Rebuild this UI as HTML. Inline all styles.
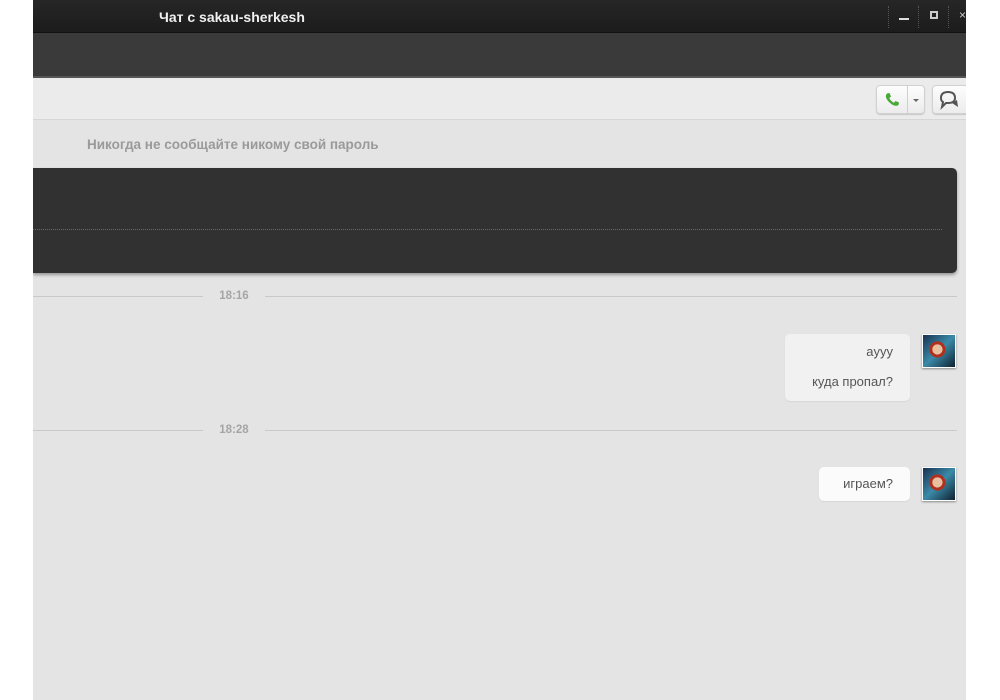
<!DOCTYPE html>
<html><head><meta charset="utf-8"><style>
*{margin:0;padding:0;box-sizing:border-box}
body{width:1000px;height:700px;background:#fff;position:relative;overflow:hidden;font-family:"Liberation Sans","DejaVu Sans",sans-serif}
.win{position:absolute;left:33px;top:0;width:933px;height:700px;background:#e4e4e4;overflow:hidden}
.title{position:absolute;left:0;top:0;width:933px;height:33px;background:linear-gradient(#262626,#1c1c1c);border-bottom:1px solid #111}
.title span{position:absolute;left:126px;top:9px;color:#f0f0f0;font-size:14px;font-weight:bold}
.bar2{position:absolute;left:0;top:33px;width:933px;height:45px;background:#3a3a3a;border-bottom:2px solid #555}
.tool{position:absolute;left:0;top:78px;width:933px;height:42px;background:#ebebeb;border-bottom:1px solid #d6d6d6}
.btn{position:absolute;top:85px;height:29px;background:linear-gradient(#fdfdfd,#ececec);border:1px solid #d0d0d0;border-radius:4px;box-shadow:0 1px 1px rgba(0,0,0,.15)}
.warn{position:absolute;left:54px;top:137px;color:#9a9a9a;font-size:13.5px;font-weight:bold}
.dark{position:absolute;left:0;top:168px;width:924px;height:105px;background:#313131;border-radius:0 5px 5px 0;box-shadow:0 2px 3px rgba(0,0,0,.35)}
.dots{position:absolute;left:0;top:61px;width:909px;border-top:1px dotted #6a6a6a}
.sep{position:absolute;left:0;width:924px;height:1px;background:#c9c9c9}
.time{position:absolute;left:170px;width:62px;text-align:center;color:#a5a5a5;font-size:11.5px;font-weight:bold;background:#e4e4e4}
.bub{position:absolute;background:#f1f1f1;border-radius:5px;color:#555;font-size:13px;text-align:right;box-shadow:0 1px 1px rgba(0,0,0,.06)}
.bub.w{background:#fbfbfb}
.av{position:absolute;width:34px;height:34px;border:1px solid #fff;box-shadow:0 1px 2px rgba(0,0,0,.4);background:radial-gradient(circle at 45% 45%,#e8c0a0 0 20%,#b03020 21% 32%,transparent 33%),linear-gradient(135deg,#1a3050,#3a8aa8 50%,#102030)}
</style></head><body>
<div class="win">
 <div class="title"><span>Чат с sakau-sherkesh</span>
  <div style="position:absolute;left:855px;top:6px;height:22px;border-left:1px dotted #555"></div>
  <div style="position:absolute;left:866px;top:18px;width:10px;height:2px;background:#ddd"></div>
  <div style="position:absolute;left:885px;top:6px;height:22px;border-left:1px dotted #555"></div>
  <div style="position:absolute;left:897px;top:11px;width:8px;height:8px;border:2px solid #ccc"></div>
  <div style="position:absolute;left:915px;top:6px;height:22px;border-left:1px dotted #555"></div>
  <div style="position:absolute;left:926px;top:8px;color:#ccc;font-size:12px">×</div>
 </div>
 <div class="bar2"></div>
 <div class="tool"></div>
 <div class="btn" style="left:843px;width:49px"></div>
 <div style="position:absolute;left:874px;top:86px;height:27px;border-left:1px solid #d0d0d0"></div>
 <svg style="position:absolute;left:851px;top:92px" width="16" height="16" viewBox="0 0 16 16"><path d="M3 1.5 L5.5 1 L7 4.5 L5.3 6 Q6.5 9 10 10.7 L11.5 9 L15 10.5 L14.5 13 Q12 15 8 12.5 Q3.5 9.5 2 5.5 Q1.5 3 3 1.5Z" fill="#4aa83a"/></svg>
 <div style="position:absolute;left:880px;top:99px;border:3px solid transparent;border-top:3px solid #666"></div>
 <div class="btn" style="left:899px;width:40px"></div>
 <svg style="position:absolute;left:904px;top:89px" width="26" height="22" viewBox="0 0 26 22"><path d="M4 9 Q4 3 11 3 Q18 3 18 9 Q18 14 11 14 L9 14 L5 18 L6 13 Q4 12 4 9Z" fill="none" stroke="#555" stroke-width="2"/><path d="M15 14 L20 11 L21 18 Z" fill="#555"/></svg>
 <div class="warn">Никогда не сообщайте никому свой пароль</div>
 <div class="dark"><div class="dots"></div></div>
 <div class="sep" style="top:296px"></div><div class="time" style="top:290px">18:16</div>
 <div class="sep" style="top:430px"></div><div class="time" style="top:424px">18:28</div>
 <div class="bub" style="left:752px;top:334px;width:125px;height:67px;padding:10px 17px 0 0;line-height:32px"><div style="line-height:16px">ayyy</div><div style="margin-top:14px;line-height:16px">куда пропал?</div></div>
 <div class="bub w" style="left:786px;top:467px;width:91px;height:34px;padding-top:9px;padding-right:17px">играем?</div>
 <div class="av" style="left:889px;top:334px"></div>
 <div class="av" style="left:889px;top:467px"></div>
</div>
</body></html>
